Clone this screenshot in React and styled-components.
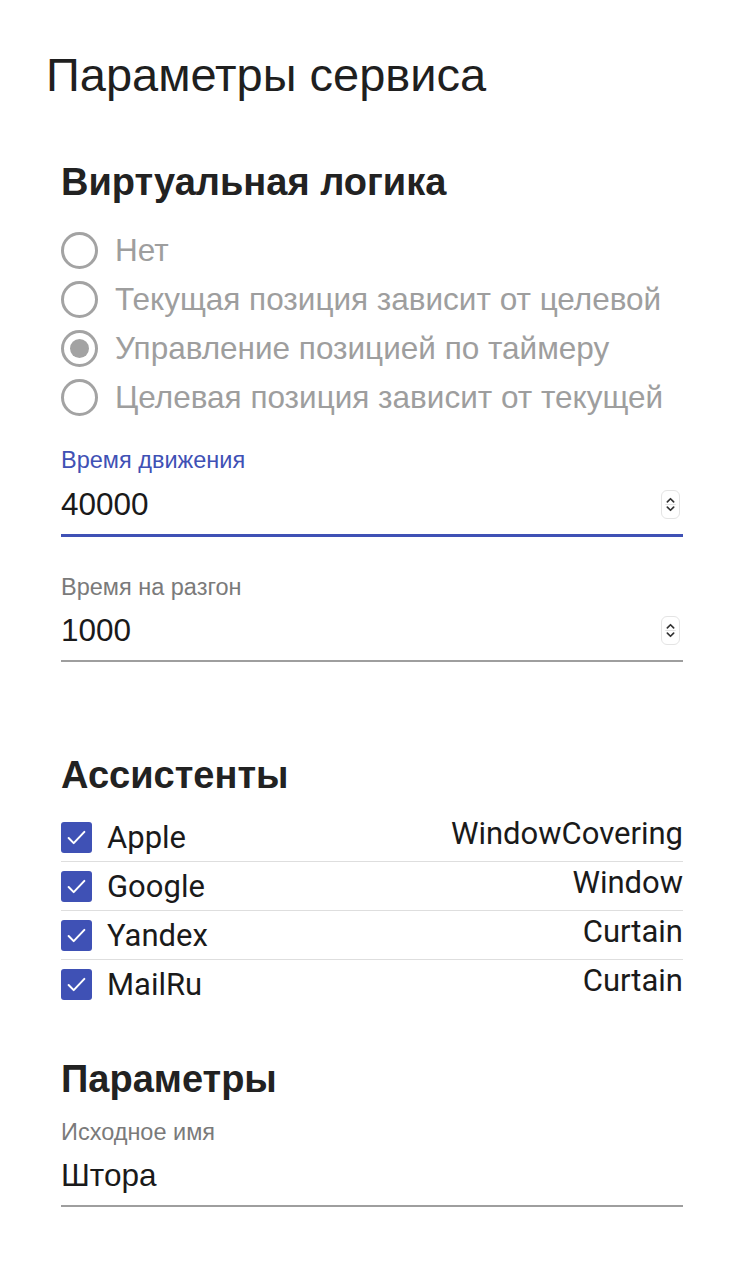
import React from 'react'
import styled, { createGlobalStyle } from 'styled-components'

const GlobalStyle = createGlobalStyle`
  html, body {
    margin: 0;
    padding: 0;
    background: #ffffff;
  }
  body {
    font-family: "Liberation Sans", Arial, sans-serif;
    color: #212121;
  }
`

const primary = '#3f51b5'

//
// Page
//
const Page = styled.div`
  width: 746px;
  min-height: 1280px;
  box-sizing: border-box;
  padding: 44px 63px 0 46px;
`

const Title = styled.h1`
  margin: 0;
  font-size: 47px;
  line-height: 62px;
  font-weight: 400;
  color: #1f1f1f;
`

const Content = styled.div`
  padding-left: 15px;
`

const SectionTitle = styled.h2`
  margin: ${p => p.top || 0}px 0 0;
  font-size: 38px;
  line-height: 48px;
  font-weight: 700;
  color: #222222;
`

//
// Radios
//
const RadioGroup = styled.div`
  display: flex;
  flex-direction: column;
  margin-top: 20px;
`

const RadioRow = styled.label`
  display: flex;
  align-items: center;
  height: 49px;
  gap: 17px;
  font-size: 31.5px;
  color: #9e9e9e;
`

const RadioCircle = styled.span`
  width: 37px;
  height: 37px;
  flex: none;
  box-sizing: border-box;
  border-radius: 50%;
  border: 3px solid #a3a3a3;
  display: flex;
  align-items: center;
  justify-content: center;

  &::after {
    content: '';
    display: ${p => (p.checked ? 'block' : 'none')};
    width: 19px;
    height: 19px;
    border-radius: 50%;
    background: #a3a3a3;
  }
`

const Radio = ({ checked, children }) => (
  <RadioRow>
    <RadioCircle checked={checked} />
    {children}
  </RadioRow>
)

//
// Text fields
//
const Field = styled.div`
  display: flex;
  flex-direction: column;
  margin-top: ${p => p.top || 0}px;
  border-bottom: ${p => (p.focused ? `3px solid ${primary}` : '2px solid #9e9e9e')};
`

const FieldLabel = styled.span`
  font-size: 23.5px;
  line-height: 28px;
  color: ${p => (p.focused ? primary : '#7a7a7a')};
`

const FieldInputRow = styled.div`
  display: flex;
  align-items: center;
  justify-content: space-between;
  height: ${p => p.h || 56}px;
`

const FieldValue = styled.span`
  font-size: 31.5px;
  color: #1a1a1a;
`

const Spinner = styled.span`
  width: 17px;
  height: 27px;
  margin-right: 3px;
  border-radius: 6px;
  border: 1px solid #e4e4e4;
  display: flex;
  align-items: center;
  justify-content: center;
`

const SpinIcon = () => (
  <Spinner>
    <svg width="11" height="21" viewBox="0 0 10 20">
      <path d="M2 7.5 L5 4.5 L8 7.5" fill="none" stroke="#333" strokeWidth="1.6" strokeLinecap="round" strokeLinejoin="round" />
      <line x1="0" y1="10" x2="10" y2="10" stroke="#e4e4e4" strokeWidth="1" />
      <path d="M2 12.5 L5 15.5 L8 12.5" fill="none" stroke="#333" strokeWidth="1.6" strokeLinecap="round" strokeLinejoin="round" />
    </svg>
  </Spinner>
)

//
// Assistants
//
const AssistantList = styled.div`
  display: flex;
  flex-direction: column;
  margin-top: 14px;
`

const AssistantRow = styled.div`
  display: flex;
  align-items: center;
  justify-content: space-between;
  height: 48px;
  border-bottom: ${p => (p.last ? 'none' : '1px solid #dedede')};
  font-family: Roboto, "Liberation Sans", sans-serif;
`

const AssistantName = styled.span`
  display: flex;
  align-items: center;
  gap: 15px;
  font-size: 31px;
  color: #1a1a1a;
`

const AssistantType = styled.span`
  font-size: 31px;
  color: #1a1a1a;
  align-self: flex-start;
  margin-top: 2px;
`

const CheckBox = styled.span`
  width: 31px;
  height: 31px;
  border-radius: 3px;
  background: ${primary};
  display: flex;
  align-items: center;
  justify-content: center;
`

const Checked = () => (
  <CheckBox>
    <svg width="27" height="27" viewBox="0 0 24 24">
      <path d="M5 12.5 L9.5 17 L19 7" fill="none" stroke="#fff" strokeWidth="1.8" strokeLinecap="round" strokeLinejoin="round" />
    </svg>
  </CheckBox>
)

const assistants = [
  { name: 'Apple', type: 'WindowCovering' },
  { name: 'Google', type: 'Window' },
  { name: 'Yandex', type: 'Curtain' },
  { name: 'MailRu', type: 'Curtain' },
]

export default function App() {
  return (
    <>
      <GlobalStyle />
      <Page>
        <Title>Параметры сервиса</Title>
        <Content>
          <SectionTitle top={52}>Виртуальная логика</SectionTitle>
          <RadioGroup>
            <Radio>Нет</Radio>
            <Radio>Текущая позиция зависит от целевой</Radio>
            <Radio checked>Управление позицией по таймеру</Radio>
            <Radio>Целевая позиция зависит от текущей</Radio>
          </RadioGroup>

          <Field top={24} focused>
            <FieldLabel focused>Время движения</FieldLabel>
            <FieldInputRow h={60}>
              <FieldValue>40000</FieldValue>
              <SpinIcon />
            </FieldInputRow>
          </Field>

          <Field top={36}>
            <FieldLabel>Время на разгон</FieldLabel>
            <FieldInputRow h={59}>
              <FieldValue>1000</FieldValue>
              <SpinIcon />
            </FieldInputRow>
          </Field>

          <SectionTitle top={89}>Ассистенты</SectionTitle>
          <AssistantList>
            {assistants.map((a, i) => (
              <AssistantRow key={a.name} last={i === assistants.length - 1}>
                <AssistantName>
                  <Checked />
                  {a.name}
                </AssistantName>
                <AssistantType>{a.type}</AssistantType>
              </AssistantRow>
            ))}
          </AssistantList>

          <SectionTitle top={47}>Параметры</SectionTitle>
          <Field top={15}>
            <FieldLabel>Исходное имя</FieldLabel>
            <FieldInputRow h={59}>
              <FieldValue>Штора</FieldValue>
            </FieldInputRow>
          </Field>
        </Content>
      </Page>
    </>
  )
}
